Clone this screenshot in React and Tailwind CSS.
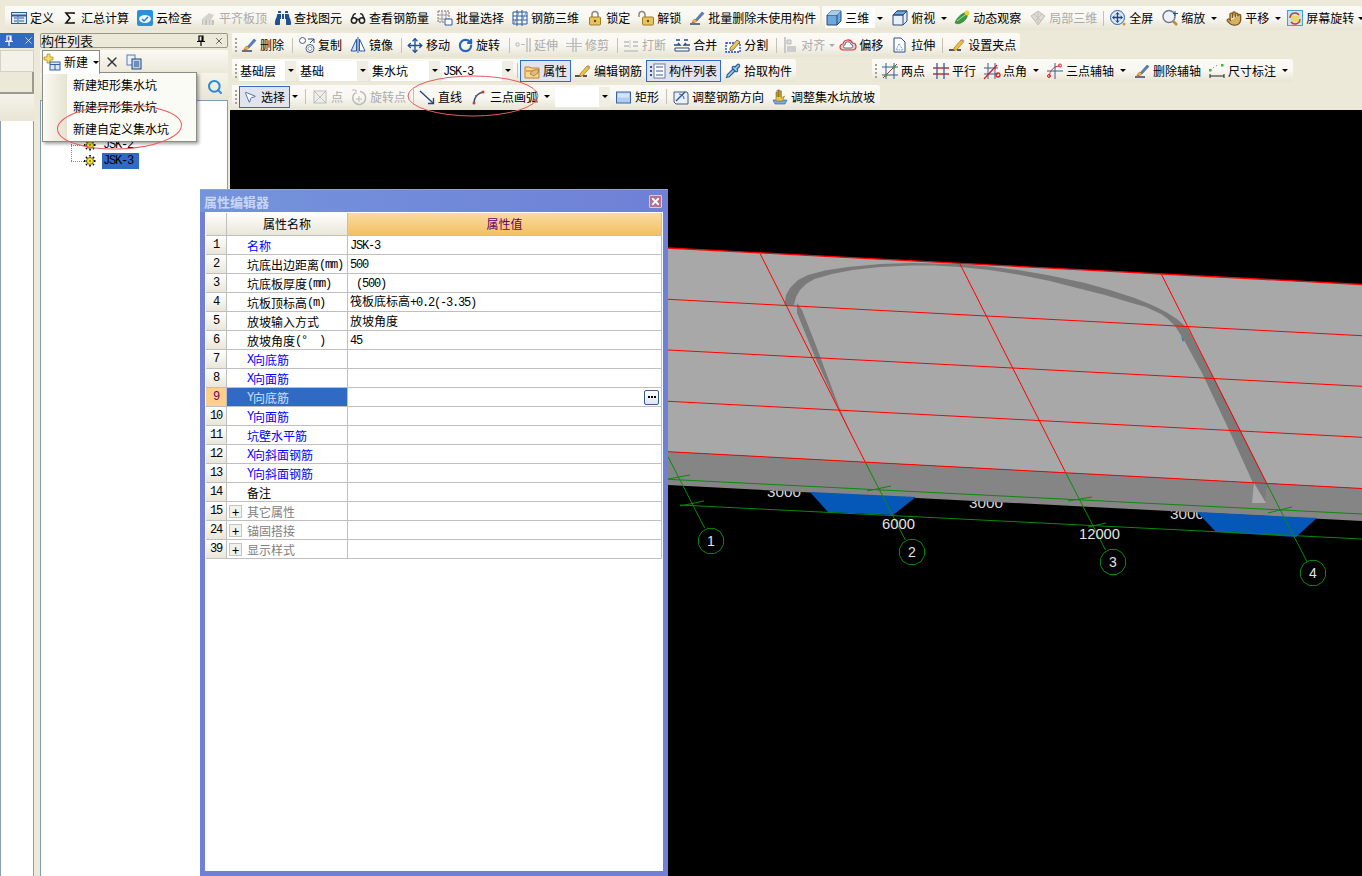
import { X, Move, RotateCw, Pipette, MousePointer2, Glasses, Hand, Search } from "lucide-react";
import { FaBinoculars } from "react-icons/fa";

const S = ({ children }) => (
  <svg viewBox="0 0 16 16" className="w-4 h-4 shrink-0 overflow-visible">
    {children}
  </svg>
);

const Brush = () => (
  <S>
    <path d="M1 14h10" stroke="#33486e" strokeWidth="1.5" />
    <path d="M6 10 13 2l2 1.5L8 11z" fill="#5b7fc4" stroke="#2b4a86" strokeWidth=".5" />
    <path d="M3 13c0-2 2-4 3-4l2 2c-1 1-3 2-5 2z" fill="#e8b050" stroke="#a06a20" strokeWidth=".5" />
    <circle cx="4" cy="13" r="1" fill="#d84a4a" />
  </S>
);
const Pencil = () => (
  <S>
    <path d="M0 13h6M8 13h4" stroke="#222" strokeWidth="1.5" />
    <path d="M5 11 12 3l2.5 2-7 8-3 .5z" fill="#f0c040" stroke="#8a6414" strokeWidth=".6" />
    <path d="m12 3 1-1 2.5 2-1 1z" fill="#d88080" />
  </S>
);
const PinMark = () => (
  <svg viewBox="0 0 10 11" className="w-[10px] h-[11px] shrink-0">
    <path d="M3 1h4v5H3zM1 6.500h8M5 7v4" fill="none" stroke="currentColor" strokeWidth="1.200" />
    <path d="M5.500 1.500h1.500v4.500H5.500z" fill="currentColor" />
  </svg>
);

const icons = {
  define: <S><rect x=".5" y="2.5" width="15" height="11" fill="#dfe9f6" stroke="#2d5c9e" /><path d="M.5 5.5h15" stroke="#2d5c9e" strokeWidth="2" /><path d="M3 8h3M3 11h3M8 8h5M8 11h5M7 6v7" stroke="#2d5c9e" /></S>,
  sigma: <S><path d="M12 4V3H4l4 5-4 5h8v-1" fill="none" stroke="#111" strokeWidth="1.6" /></S>,
  cloud: <S><rect x="0" y="0" width="16" height="16" rx="2" fill="#2b8fdc" /><ellipse cx="8" cy="9" rx="6" ry="4" fill="#eaf6ff" /><path d="m5 9 2 2 4-4" fill="none" stroke="#2b7cc4" strokeWidth="1.4" /></S>,
  flush: <S><path d="M1 10 9 3l5 2-3 5z" fill="#d4d4cc" /><rect x="2" y="10" width="12" height="5" fill="#c4c4bc" /><path d="M4 10v5M8 10v5M11 10v5" stroke="#eee" /></S>,
  binoculars: <span className="w-4 h-4 shrink-0 flex items-center justify-center text-[#1f4f94]"><FaBinoculars size={16} /></span>,
  glasses: <span className="w-4 h-4 shrink-0 flex items-center justify-center text-[#222]"><Glasses size={17} strokeWidth={2.2} /></span>,
  batch: <S><path d="M1 1h11v11H1z" fill="#f4f4f4" stroke="#777" strokeDasharray="2 1" /><path d="M1 5h11M1 9h11M5 1v11M9 1v11" stroke="#999" /><path d="M8 9h7v6H8z" fill="#fff" stroke="#2a5aa8" /></S>,
  rebar3d: <S><path d="M1 2h14v12H1z" fill="#fff" stroke="#24559c" /><path d="M1 6h14M1 10h14M5 0v16M10 0v16" stroke="#24559c" /><path d="m2 14 5-12M9 14l5-12" stroke="#6a8cc4" /></S>,
  lock: <S><path d="M5 7V4.500a3 3 0 0 1 6 0V7" fill="none" stroke="#8a8a80" strokeWidth="1.500" /><rect x="2.500" y="7" width="11" height="8" rx="1" fill="#e8c460" stroke="#a07c20" /><circle cx="8" cy="11" r="1.200" fill="#6a4a10" /></S>,
  unlock: <S><path d="M1 7V4.500a3 3 0 0 1 6 0V7" fill="none" stroke="#8a8a80" strokeWidth="1.500" /><rect x="4.500" y="7" width="11" height="8" rx="1" fill="#e8c460" stroke="#a07c20" /><circle cx="10" cy="11" r="1.200" fill="#6a4a10" /></S>,
  brush: <Brush />,
  cube: <S><path d="M1 5 5 1h10v10l-4 4H1z" fill="#6fa8dc" stroke="#24497c" /><path d="M1 5h10v10M11 5l4-4" fill="none" stroke="#24497c" /><path d="M1 5 5 1h10l-4 4z" fill="#a8cdea" /></S>,
  topview: <S><path d="M1 5 5 1h10v10l-4 4H1z" fill="#e8f0f8" stroke="#24497c" /><path d="M1 5 5 1h10l-4 4z" fill="#6fa8dc" stroke="#24497c" /><path d="M1 5h10v10M11 5l4-4" fill="none" stroke="#24497c" /></S>,
  orbit: <S><path d="M1 13C3 7 8 3 13 2c2 3-1 9-6 11-2 1-4 1-6 0z" fill="#3c9a3c" stroke="#1f5f1f" strokeWidth=".5" /><circle cx="13" cy="3" r="2.500" fill="#e8d040" /><path d="M3 11 11 5" stroke="#a8e0a8" /></S>,
  local3d: <S><path d="M1 6 8 1l7 5-7 9z" fill="#dcdcd4" stroke="#c0c0b8" /><path d="M4 4l7 7M8 1v14M12 4 5 11" stroke="#c4c4bc" /></S>,
  full: <S><circle cx="7.500" cy="7.500" r="7" fill="#dbe8f8" stroke="#2f5fa8" /><path d="M7.500 3v9M3 7.500h9" stroke="#1f3f88" strokeWidth="1.300" /><path d="m6 4.500 1.500-2 1.500 2M6 10.500l1.500 2 1.500-2M4.500 6l-2 1.500 2 1.500M10.500 6l2 1.500-2 1.500" fill="none" stroke="#1f3f88" /><circle cx="14" cy="14" r="1.500" fill="#d89020" /></S>,
  zoomIn: <S><circle cx="7" cy="6.500" r="6" fill="#eef2f8" stroke="#6a7a98" strokeWidth="1.500" /><path d="m11 11 4 4" stroke="#c08a30" strokeWidth="2.500" /><path d="M13 1v5M11 3.500h5" stroke="#24497c" /></S>,
  pan: <span className="w-4 h-4 shrink-0 flex items-center justify-center"><Hand size={17} fill="#d8b060" stroke="#7c5a20" /></span>,
  screenRot: <S><rect x=".5" y=".5" width="15" height="15" fill="#bfe8f4" stroke="#48a0c8" /><rect x="4" y="6" width="8" height="6" fill="#e8d870" /><path d="M3 8a5 5 0 0 1 9-3M13 9a5 5 0 0 1-9 3" fill="none" stroke="#e03030" strokeWidth="1.400" /></S>,
  copy: <S><circle cx="3.500" cy="3.500" r="3" fill="#fff" stroke="#4a5a7c" /><circle cx="11" cy="11.500" r="4" fill="#fff" stroke="#4a5a7c" /><circle cx="11" cy="11.500" r="2" fill="none" stroke="#8a9ab8" /><path d="M9 2h6v4M15 2l-4 4" fill="none" stroke="#24497c" /></S>,
  mirror: <S><path d="M6.500 2 1 14h5.500z" fill="#cfe0f4" stroke="#2a5aa8" /><path d="M9.500 2 15 14H9.500z" fill="#fff" stroke="#2a5aa8" /><path d="M8 0v16" stroke="#2a5aa8" /></S>,
  move: <span className="w-4 h-4 shrink-0 flex items-center justify-center text-[#1f4f94]"><Move size={17} strokeWidth={2} /></span>,
  rotate: <span className="w-4 h-4 shrink-0 flex items-center justify-center text-[#2a62c0]"><RotateCw size={15} strokeWidth={3.5} /></span>,
  extend: <S><path d="M1 6h3v3H1zM6 7.500h4" fill="none" stroke="#bbb" /><path d="M12 1v14M15 1v14" stroke="#bbb" strokeWidth="1.400" /></S>,
  trim: <S><path d="M0 6.500h16M0 9.500h16" stroke="#bbb" /><path d="M7 1v14M10 1v14" stroke="#bbb" strokeWidth="1.400" /></S>,
  breakIcon: <S><path d="M1 13h14v2H1z" fill="#ccc" /><path d="M1 5h5M10 5h5M1 9h5M10 9h5" stroke="#bbb" strokeWidth="1.400" /><path d="M7 3v8" stroke="#ccc" /></S>,
  merge: <S><path d="M0 8h6l-2-2M16 8h-6l2-2" fill="none" stroke="#24497c" strokeWidth="1.300" /><path d="M1 11h14v3H1z" fill="#fff" stroke="#24497c" /><path d="M2 3h4M10 3h4" stroke="#24497c" strokeWidth="1.300" /></S>,
  split: <S><path d="M1 6h14v9H1z" fill="#fff" stroke="#1a40c8" strokeDasharray="2 1" strokeWidth="1.300" /><path d="m5 11 7-8 3 2-7 8-3 .5z" fill="#f0c850" stroke="#444" strokeWidth=".7" /></S>,
  align: <S><path d="M3 0v16" stroke="#bbb" strokeWidth="1.500" /><path d="M5 9h9v6H5z" fill="#ccc" /><path d="M5 3h4v4H5z" fill="#ddd" stroke="#bbb" /></S>,
  offset: <S><path d="M3 13a3 3 0 0 1 0-6 5 5 0 0 1 9.500-1 3.500 3.500 0 0 1 0 7z" fill="#f4c8c0" stroke="#c84040" strokeWidth="1.200" /><path d="M5 11a1.500 1.500 0 0 1 0-3 3 3 0 0 1 6-.5 1.700 1.700 0 0 1 0 3.500z" fill="#fff" stroke="#5070b0" /></S>,
  stretch: <S><path d="M2 1h7l4 4v10H2z" fill="#fff" stroke="#2a4a88" /><path d="M7 7 4 13h7z" fill="none" stroke="#2a78c8" strokeDasharray="1 1" /></S>,
  grip: <Pencil />,
  attr: <S><path d="M1 4h5l1 1h8v10H1z" fill="#f8d890" stroke="#c88028" /><path d="M2 8h13" stroke="#e8a040" strokeWidth="2" /><path d="M6 11c2-4 5-5 9-4l-1 3-4 3z" fill="#e0b880" stroke="#806030" strokeWidth=".6" /></S>,
  editBar: <Pencil />,
  list: <S><rect x="4" y="1" width="11" height="14" fill="#fff" stroke="#6c7a94" /><path d="M6 4h7M6 8h7M6 12h7" stroke="#2a5a9c" /><path d="M0 3h2v2H0zM0 7h2v2H0zM0 11h2v2H0z" fill="#2a5a9c" /></S>,
  pick: <span className="w-4 h-4 shrink-0 flex items-center justify-center text-[#24609c]"><Pipette size={16} fill="#a8c8e8" strokeWidth={1.8} /></span>,
  twoPt: <S><path d="M4 0v16M12 0v16M0 4h16M0 12h16" stroke="#3a5a94" /><path d="m1 15 14-14" stroke="#b03030" /><circle cx="4" cy="12" r="1.500" fill="#3aa03a" /><circle cx="12" cy="4" r="1.500" fill="#3aa03a" /></S>,
  parallel: <S><path d="M0 5h16M0 11h16" stroke="#c83030" strokeWidth="1.300" /><path d="M4 0v16M11 0v16" stroke="#3a5a9c" strokeWidth="1.300" /></S>,
  ptAngle: <S><path d="M4 0v16M11 0v16M0 5h14M0 11h14" stroke="#3a5a94" /><path d="m0 16 13-14" stroke="#d02020" strokeWidth="1.200" /><circle cx="14" cy="12" r="2" fill="none" stroke="#e02020" strokeWidth="1.300" /></S>,
  threeAxis: <S><path d="M2 14C3 7 7 3 13 3" fill="none" stroke="#d03030" /><path d="M8 0v16M0 8h16" stroke="#3a5a94" /><circle cx="2" cy="13" r="1.500" fill="none" stroke="#e02020" /><circle cx="13" cy="2.500" r="1.500" fill="none" stroke="#e02020" /></S>,
  dim: <S><rect x="0" y="6" width="2.500" height="2.500" fill="#38b838" /><rect x="12" y="1" width="2.500" height="2.500" fill="#38b838" /><path d="M1 11v4M15 11v4M1 13h14" stroke="#222" /><path d="M4 5l1-1M7 3l2-1" stroke="#777" strokeDasharray="1 1" /></S>,
  cursor: <span className="w-4 h-4 shrink-0 flex items-center justify-center text-[#3a5a9c]"><MousePointer2 size={14} strokeWidth={1.4} fill="#fff" /></span>,
  pointBox: <S><rect x="2" y="2" width="12" height="12" fill="#f0f0ea" stroke="#bbb" /><path d="m2 2 12 12M14 2 2 14" stroke="#bbb" /></S>,
  rotPoint: <S><path d="M4 4a6.500 6.500 0 1 0 5-1.500" fill="none" stroke="#bbb" strokeWidth="1.600" /><path d="M1 1h4v4" fill="none" stroke="#bbb" /><path d="M8 7v6M5 10h6" stroke="#bbb" /></S>,
  line: <S><path d="m1 2 13 12" stroke="#1f3f88" strokeWidth="1.300" /><path d="M14.500 9v5.500H9" fill="none" stroke="#1f3f88" strokeWidth="1.300" /></S>,
  arc: <S><path d="M3 14c0-6 4-10 9-11" fill="none" stroke="#2a4a88" strokeWidth="1.500" /><circle cx="3" cy="14" r="1.500" fill="#d04030" /><circle cx="5" cy="7" r="1" fill="#d04030" /><circle cx="12" cy="3" r="1.500" fill="#d04030" /></S>,
  rect: <S><rect x=".5" y="3" width="14" height="11" fill="#b0ccf4" stroke="#3a62a8" /><rect x="2" y="4.500" width="11" height="4" fill="#d4e4fa" /></S>,
  adjustDir: <S><path d="M1 3h13l1 2v10H3L1 13z" fill="#e8f0f8" stroke="#4a5a78" /><path d="M3 12 12 3" stroke="#2a5aa8" strokeWidth="1.500" /><path d="M6 5a5 5 0 0 1 5 5" fill="none" stroke="#2a5aa8" /></S>,
  adjustSlope: <S><path d="M1 11h14l-2 4H3z" fill="#78a8e0" stroke="#2a5aa8" strokeWidth=".6" /><path d="M4 11V3l1 0v5V1h1.500v7V1H8v7V2h1.500v7l3-2-2 5H4z" fill="#e8c848" stroke="#7a5a10" strokeWidth=".5" /></S>,
};

const Mono = ({ children }) => (
  <span className="font-['Liberation_Mono',monospace] text-[12px] tracking-[-1.2px] whitespace-pre">
    {children}
  </span>
);

const Caret = ({ className = "ml-[6px]", dim }) => (
  <span
    className={`w-0 h-0 shrink-0 border-x-[3px] border-t-[3px] border-x-transparent ${dim ? "border-t-[#aaa]" : "border-t-black"} ${className}`}
  />
);

const Sep = ({ className = "" }) => <span className={`w-px h-[15px] shrink-0 bg-[#c5c2b0] ${className}`} />;
const Grip = () => <span className="w-[2px] h-[14px] shrink-0 ml-[3px] border-l-2 border-dotted border-[#a3a194]" />;

const Tool = ({ i, t, dim, className = "ml-2" }) => (
  <div className={`flex items-center gap-[3px] shrink-0 ${dim ? "text-[#aaa]" : "text-black"} ${className}`}>
    {icons[i]}
    <span className="whitespace-nowrap">{t}</span>
  </div>
);

const Bar = ({ className = "", children }) => (
  <div
    className={`flex items-center rounded-r-[3px] bg-gradient-to-b from-[#fbfaf6] via-[#f8f7f1] to-[#e7e4d3] ${className}`}
  >
    {children}
  </div>
);

const Combo = ({ w, t, className }) => (
  <div className={`flex items-center h-[20px] bg-white shrink-0 ${w} ${className}`}>
    <span className="flex-1 pl-px whitespace-nowrap">{t}</span>
    <span className="w-[11px] h-full flex items-center justify-center bg-[#f0eee3]">
      <Caret className="" />
    </span>
  </div>
);

const Toggle = ({ i, t, w, className }) => (
  <div
    className={`flex items-center h-[22px] pl-[3px] gap-[3px] shrink-0 border border-[#316ac5] bg-[#e1e4ee] ${w} ${className}`}
  >
    {icons[i]}
    <span className="whitespace-nowrap">{t}</span>
  </div>
);

const Gear = () => (
  <svg viewBox="0 0 12 12" className="w-3 h-3 shrink-0">
    <path d="M6 0v12M0 6h12M2 2l8 8M10 2l-8 8" stroke="#111" strokeWidth="1.800" strokeDasharray="1.500 1" />
    <circle cx="6" cy="6" r="3.500" fill="#f4e818" stroke="#333" strokeWidth=".7" />
    <circle cx="6" cy="6" r="1" fill="#7a7a10" />
  </svg>
);

const LeftTabs = () => (
  <div className="w-[34px] shrink-0 flex flex-col">
    <div className="h-[15px] bg-[#316ac5] flex items-center gap-[9px] pl-[4px] text-white">
      <PinMark />
      <X size={11} strokeWidth={1.5} />
    </div>
    <div className="h-[22px] mt-[2px] bg-[#f4f2e8] border border-[#d4d2c4]" />
    <div className="h-[22px] bg-[#ece9d8] border-r-2 border-b-2 border-[#9c9a8c]" />
    <div className="h-[27px] bg-gradient-to-b from-[#f6f4ea] to-[#e8e5d5]" />
    <div className="flex-1 bg-white border-x border-[#8a9cb8]" />
  </div>
);

const ComponentList = () => (
  <div className="w-[188px] ml-[6px] shrink-0 flex flex-col">
    <div className="h-[15px] flex items-center justify-between pr-[3px] rounded-[2px] border border-[#9a988a] bg-[#ece9d8]">
      <span className="text-[#111] text-[13px]">构件列表</span>
      <div className="flex items-center gap-2 text-black">
        <PinMark />
        <X size={10} strokeWidth={1.4} />
      </div>
    </div>
    <div className="h-[23px] mt-[2px] flex items-center bg-gradient-to-b from-[#faf9f4] to-[#ece9d8]">
      <div className="relative z-20 ml-[2px] w-[58px] h-[24px] flex items-center bg-white border border-b-0 border-[#8c8c84] pl-[1px] gap-1">
        <S>
          <path d="M3 0h3v3h3v3H6v3H3V6H0V3h3z" fill="#f4e060" stroke="#a08820" strokeWidth=".7" />
          <rect x="6" y="8" width="10" height="8" fill="#dbe6f5" stroke="#34619c" />
          <path d="M6 10.500h10M11 10.500V16" stroke="#34619c" />
        </S>
        <span>新建</span>
        <Caret className="ml-[1px]" />
      </div>
      <span className="ml-[4px] text-[#333]"><X size={16} strokeWidth={2} /></span>
      <span className="ml-[6px]">
        <S>
          <rect x="1" y="1" width="8" height="10" fill="#e8f0f8" stroke="#5a7cb0" />
          <rect x="6" y="5" width="9" height="10" fill="#b8d0ec" stroke="#24497c" />
          <path d="M8 8h5M8 10h5M8 12h5" stroke="#24497c" />
        </S>
      </span>
    </div>
    <div className="h-[27px] flex items-center justify-end pr-[5px] bg-gradient-to-b from-[#f6f4ea] to-[#e8e5d5]">
      <span className="text-[#2a8ad8]"><Search size={16} strokeWidth={3} /></span>
    </div>
    <div className="flex-1 bg-white border-x border-t border-[#7f9db9] pt-[36px] pl-[30px]">
      <div className="relative">
        {/* tree connector */}
        <span className="absolute left-0 -top-[4px] h-[28px] w-px border-l border-dotted border-[#888]" />
        {[["JSK-2", false], ["JSK-3", true]].map(([name, on]) => (
          <div key={name} className="h-[16px] flex items-center">
            <span className="w-[13px] h-px border-t border-dotted border-[#888]" />
            <span className="w-[12px] flex justify-center"><Gear /></span>
            <span className={`ml-[6px] w-[37px] h-[16px] flex items-center pl-[1px] ${on ? "bg-[#316ac5]" : ""}`}>
              <Mono>{name}</Mono>
            </span>
          </div>
        ))}
      </div>
    </div>
  </div>
);

const rows = [
  ["1", <>名称</>, <Mono>JSK-3</Mono>, "blue"],
  ["2", <>坑底出边距离<Mono>(mm)</Mono></>, <Mono>500</Mono>],
  ["3", <>坑底板厚度<Mono>(mm)</Mono></>, <Mono> (500)</Mono>],
  ["4", <>坑板顶标高<Mono>(m)</Mono></>, <>筏板底标高<Mono>+0.2(-3.35)</Mono></>],
  ["5", <>放坡输入方式</>, <>放坡角度</>],
  ["6", <>放坡角度<Mono>(°  )</Mono></>, <Mono>45</Mono>],
  ["7", <><Mono>X</Mono>向底筋</>, null, "blue"],
  ["8", <><Mono>X</Mono>向面筋</>, null, "blue"],
  ["9", <><Mono>Y</Mono>向底筋</>, null, "selected"],
  ["10", <><Mono>Y</Mono>向面筋</>, null, "blue"],
  ["11", <>坑壁水平筋</>, null, "blue"],
  ["12", <><Mono>X</Mono>向斜面钢筋</>, null, "blue"],
  ["13", <><Mono>Y</Mono>向斜面钢筋</>, null, "blue"],
  ["14", <>备注</>, null],
  ["15", <>其它属性</>, null, "group"],
  ["24", <>锚固搭接</>, null, "group"],
  ["39", <>显示样式</>, null, "group"],
];

const PropertyEditor = () => (
  <div className="absolute left-[200px] top-[189px] w-[468px] h-[687px] z-10 flex flex-col border-x-[5px] border-b-[5px] border-[#6f80d6] bg-white">
    <div className="-mx-[5px] h-[23px] shrink-0 flex items-center justify-between pl-[4px] pr-[6px] bg-gradient-to-r from-[#7494dc] to-[#6f80d6] border-t border-[#8ea2e6]">
      <span className="text-[13px] font-bold text-[#c8d6f2]">属性编辑器</span>
      <span className="w-[13px] h-[13px] flex items-center justify-center rounded-[1px] border border-[#d8c8e0] bg-[#b4708c] text-white">
        <X size={11} strokeWidth={4} />
      </span>
    </div>
    <div className="mt-[1px] ml-[1px] w-[456px] border-r border-[#bfbfbf] text-[12px]">
      <div className="flex h-[23px] border-b border-[#bfbfbf]">
        <div className="w-[21px] border-r border-[#bfbfbf] bg-gradient-to-b from-white to-[#e9e6d8]" />
        <div className="w-[121px] border-r border-[#bfbfbf] flex items-center justify-center bg-gradient-to-b from-white to-[#e9e6d8]">属性名称</div>
        <div className="flex-1 flex items-center justify-center text-[#660066] bg-gradient-to-b from-[#fadb9f] to-[#f2c064]">属性值</div>
      </div>
      {rows.map(([n, name, val, kind]) => (
        <div key={n} className="flex h-[19px] border-b border-[#bfbfbf]">
          <div className={`w-[21px] shrink-0 border-r border-[#bfbfbf] flex items-center justify-center ${kind === "selected" ? "bg-[#fdd08a] text-[#660066]" : "bg-gradient-to-b from-white to-[#e9e6d8]"}`}>
            <Mono>{n}</Mono>
          </div>
          <div
            className={`w-[121px] shrink-0 border-r border-[#bfbfbf] flex items-center pt-px whitespace-nowrap ${
              kind === "selected"
                ? "bg-[#316ac5] text-[#cfe0ff] pl-[20px]"
                : kind === "blue"
                  ? "text-[#0000ff] pl-[20px]"
                  : kind === "group"
                    ? "text-[#808080] pl-[2px]"
                    : "pl-[20px]"
            }`}
          >
            {kind === "group" && (
              <span className="w-[13px] h-[13px] mr-[5px] flex items-center justify-center border border-[#c4c4c0] bg-[#f2f2ec] text-black text-[13px] leading-none">+</span>
            )}
            {name}
          </div>
          <div className="flex-1 flex items-center justify-between pl-[2px] pr-[2px] whitespace-pre">
            <span>{val}</span>
            {kind === "selected" && (
              <span className="w-[15px] h-[15px] flex items-center justify-center gap-px rounded-[2px] border border-[#3a5a8a] bg-gradient-to-b from-white to-[#dfe6f0]">
                <i className="w-[2px] h-[2px] bg-black" />
                <i className="w-[2px] h-[2px] bg-black" />
                <i className="w-[2px] h-[2px] bg-black" />
              </span>
            )}
          </div>
        </div>
      ))}
    </div>
  </div>
);

const axes = [
  [711, 541, "1"],
  [912, 552, "2"],
  [1113, 562, "3"],
  [1313, 573, "4"],
];

// 12-sided outline, the CAD view draws its circles this coarse
const gon = (cx, cy, r) =>
  Array.from({ length: 12 }, (_, k) => {
    const a = (k * Math.PI) / 6 + Math.PI / 12;
    return `${cx + r * Math.cos(a)},${cy + r * Math.sin(a)}`;
  }).join(" ");

const labelClass = "font-['Liberation_Sans',sans-serif]";

const Canvas = () => (
  <div className="flex-1 min-h-0 bg-black">
    <svg viewBox="230 110 1132 766" className="w-full h-full block">
      <g fill="#d8d8d8" fontSize="14" className={labelClass}>
        <text x="767" y="497" textLength="34" lengthAdjust="spacingAndGlyphs">3000</text>
        <text x="969" y="508" textLength="34" lengthAdjust="spacingAndGlyphs">3000</text>
        <text x="1170" y="519" textLength="34" lengthAdjust="spacingAndGlyphs">3000</text>
      </g>
      <polygon points="668,248 1362,284.500 1362,488.500 668,451.700" fill="#a8a8a8" />
      <polygon points="668,451.700 1362,488.500 1362,521 668,485" fill="#858585" />
      {/* sump outline, arc then the two legs */}
      <polygon
        points="784.500,305 786,295 790,288 798,280 808,275 825,270.500 848,267 880,264 911,263 960,264 990,266.500 1018,270 1050,275.500 1085,283 1110,290 1134.600,298 1152,305 1166,312 1177,319 1186,327 1175,326 1168,319 1161,314 1146,307 1130,302.500 1105,295 1081,289 1050,281 1018,274.500 990,270 960,267 935,265.500 911,265.500 880,267 852.500,270 832,274 814.500,279 806,284 800,290 796,297 794,305"
        fill="#7a7a7a"
      />
      <polygon points="797,303 802,310 815,343 839,407 857,447 839,410 815,357 797,313" fill="#7b7b7b" />
      <polygon points="1175,326 1187,327 1215,380 1242,433 1267,483 1265,503 1253,483 1229,430 1202,373 1184,340" fill="#7b7b7b" />
      <polygon points="1254,483 1266,503 1252,503" fill="#aaaaaa" />
      <polygon points="1181,336 1184,340 1183,342" fill="#1f6fd0" />
      <polygon points="810,492 916,497 893,515 828,512" fill="#0558b8" />
      <polygon points="1197,512 1317,518 1296,537 1216,532" fill="#0558b8" />
      <g stroke="#ff0000" strokeWidth="1" fill="none">
        <path d="M668 248 1362 284.500" strokeWidth="1.300" />
        <path d="M668 299.300 1362 335.700" />
        <path d="M668 350 1362 386.300" />
        <path d="M668 401.300 1362 437.300" />
        <path d="M668 451.700 1362 488.500" />
        <path d="M760.300 254 865 461.700" />
        <path d="M960 264 1065.200 471.700" />
        <path d="M1161.400 274.300 1266.600 483.300" />
      </g>
      <g stroke="#0a8a0a" strokeWidth="1" fill="none">
        <path d="M668 479.300 1362 514" />
        <path d="M680 505 1362 539" />
        <path d="M668 456.700 704.800 528.300" />
        <path d="M865 461.700 905.300 540" />
        <path d="M1065.200 471.700 1105.500 550" />
        <path d="M1266.600 483.300 1307 561.700" />
        <path d="M668 479 690 475M867 491 891 486M1068 501 1092 497M1268 513 1292 507M680 506 704 501M1088 527 1106 523" />
        {axes.map(([x, y, n]) => (
          <polygon key={n} points={gon(x, y, 13)} />
        ))}
      </g>
      <g fill="#e4e4e4" fontSize="15" className={labelClass}>
        <text x="882" y="529" textLength="33" lengthAdjust="spacingAndGlyphs">6000</text>
        <text x="1079" y="539" textLength="41" lengthAdjust="spacingAndGlyphs">12000</text>
      </g>
      <g fill="#e4e4e4" fontSize="14" textAnchor="middle" className={labelClass}>
        {axes.map(([x, y, n]) => (
          <text key={n} x={x} y={y + 5}>
            {n}
          </text>
        ))}
      </g>
    </svg>
  </div>
);

export default function App() {
  return (
    <div className="relative w-[1362px] h-[876px] overflow-hidden flex flex-col bg-[#ece9d8] text-[12px] leading-none text-black font-['Noto_Sans_CJK_SC',sans-serif]">
      <div className="h-[33px] shrink-0 pt-[6px] flex items-start">
        <Bar className="ml-[5px] h-[24px] pr-1">
          <Tool i="define" t="定义" className="ml-[6px]" />
          <Tool i="sigma" t="汇总计算" />
          <Tool i="cloud" t="云检查" />
          <Tool i="flush" t="平齐板顶" dim />
          <Tool i="binoculars" t="查找图元" />
          <Tool i="glasses" t="查看钢筋量" />
          <Tool i="batch" t="批量选择" />
          <Tool i="rebar3d" t="钢筋三维" />
          <Tool i="lock" t="锁定" />
          <Tool i="unlock" t="解锁" />
          <Tool i="brush" t="批量删除未使用构件" />
        </Bar>
        <Bar className="ml-[2px] h-[24px] flex-1 min-w-0 overflow-hidden">
          <div className="ml-[3px] w-[50px] h-[20px] bg-white flex items-center gap-[3px] pl-px shrink-0">
            {icons.cube}
            <span>三维</span>
          </div>
          <Caret className="ml-[2px]" />
          <Tool i="topview" t="俯视" className="ml-[9px]" />
          <Caret />
          <Tool i="orbit" t="动态观察" className="ml-[7px]" />
          <Tool i="local3d" t="局部三维" dim className="ml-[9px]" />
          <Sep className="ml-[6px]" />
          <Tool i="full" t="全屏" className="ml-[6px]" />
          <Tool i="zoomIn" t="缩放" className="ml-[9px]" />
          <Caret />
          <div className="ml-[9px] flex items-center gap-[3px] shrink-0">
            {icons.pan}
            <span>平移</span>
          </div>
          <Caret />
          <Tool i="screenRot" t="屏幕旋转" className="ml-[6px]" />
          <Caret className="ml-1" />
        </Bar>
      </div>

      <div className="flex-1 min-h-0 flex">
        <LeftTabs />
        <ComponentList />
        <div className="flex-1 min-w-0 ml-[2px] flex flex-col">
          <div className="flex pl-[2px] h-[26px] shrink-0">
            <Bar className="h-[24px] pr-1">
              <Grip />
              <Tool i="brush" t="删除" className="ml-1" />
              <Sep className="ml-2" />
              <Tool i="copy" t="复制" className="ml-[6px]" />
              <Tool i="mirror" t="镜像" />
              <Sep className="ml-2" />
              <Tool i="move" t="移动" className="ml-[5px]" />
              <Tool i="rotate" t="旋转" className="ml-[7px]" />
              <Sep className="ml-[9px]" />
              <Tool i="extend" t="延伸" dim className="ml-[5px]" />
              <Tool i="trim" t="修剪" dim />
              <Sep className="ml-2" />
              <Tool i="breakIcon" t="打断" dim className="ml-[5px]" />
              <Tool i="merge" t="合并" />
              <Tool i="split" t="分割" />
              <Sep className="ml-2" />
              <Tool i="align" t="对齐" dim className="ml-[5px]" />
              <Caret className="ml-1" dim />
              <Tool i="offset" t="偏移" className="ml-[5px]" />
              <Tool i="stretch" t="拉伸" className="ml-[9px]" />
              <Sep className="ml-[7px]" />
              <Tool i="grip" t="设置夹点" className="ml-[6px]" />
            </Bar>
          </div>
          <div className="flex pl-[2px] h-[26px] shrink-0">
            <Bar className="h-[23px] pr-1">
              <Grip />
              <Combo w="w-[57px]" t="基础层" className="ml-[2px]" />
              <Combo w="w-[69px]" t="基础" className="ml-[3px]" />
              <Combo w="w-[69px]" t="集水坑" className="ml-[3px]" />
              <Combo w="w-[71px]" t={<Mono>JSK-3</Mono>} className="ml-[2px]" />
              <Sep className="ml-1" />
              <Toggle i="attr" t="属性" w="w-[51px]" className="ml-[2px]" />
              <Tool i="editBar" t="编辑钢筋" className="ml-1" />
              <Toggle i="list" t="构件列表" w="w-[75px]" className="ml-1" />
              <Tool i="pick" t="拾取构件" className="ml-1" />
            </Bar>
            <Bar className="h-[23px] ml-[76px] pr-[5px]">
              <Grip />
              <Tool i="twoPt" t="两点" className="ml-[5px]" />
              <Tool i="parallel" t="平行" />
              <Tool i="ptAngle" t="点角" />
              <Caret />
              <Tool i="threeAxis" t="三点辅轴" />
              <Caret />
              <Tool i="brush" t="删除辅轴" />
              <Tool i="dim" t="尺寸标注" />
              <Caret />
            </Bar>
          </div>
          <div className="flex pl-[2px] h-[25px] shrink-0">
            <Bar className="h-[25px] pb-[2px] pr-[5px]">
              <Grip />
              <div className="ml-[2px] w-[51px] h-[22px] flex items-center gap-[3px] pl-[2px] shrink-0 border border-[#316ac5] bg-[#e1e4ee]">
                {icons.cursor}
                <span>选择</span>
              </div>
              <Caret className="ml-[2px]" />
              <Sep className="ml-[7px]" />
              <Tool i="pointBox" t="点" dim className="ml-[6px]" />
              <Tool i="rotPoint" t="旋转点" dim />
              <Sep className="ml-[7px]" />
              <Tool i="line" t="直线" className="ml-[5px]" />
              <Tool i="arc" t="三点画弧" className="ml-[9px]" />
              <Caret />
              <Combo w="w-[55px]" t="" className="ml-[5px]" />
              <Tool i="rect" t="矩形" className="ml-[6px]" />
              <Sep className="ml-[7px]" />
              <Tool i="adjustDir" t="调整钢筋方向" className="ml-[6px]" />
              <Tool i="adjustSlope" t="调整集水坑放坡" />
            </Bar>
          </div>
          <Canvas />
        </div>
      </div>

      <PropertyEditor />

      <div className="absolute left-[42px] top-[72px] w-[155px] h-[70px] z-10 flex flex-col border border-[#8c8c84] bg-[#fbfbf5] shadow-[2px_2px_3px_rgba(0,0,0,0.35)]">
        <div className="absolute left-0 top-0 bottom-0 w-[24px] bg-gradient-to-r from-[#fbfaf3] to-[#e6e3d2]" />
        {["新建矩形集水坑", "新建异形集水坑", "新建自定义集水坑"].map((label) => (
          <div key={label} className="relative h-[22px] shrink-0 flex items-center pl-[30px] first:mt-[2px] pt-[2px]">
            {label}
          </div>
        ))}
      </div>

      <svg className="absolute left-0 top-0 w-[1362px] h-[876px] z-30 pointer-events-none" viewBox="0 0 1362 876">
        <ellipse cx="119.500" cy="127" rx="62" ry="22" fill="none" stroke="#e85a5a" transform="rotate(-2 119.500 127)" />
        <ellipse cx="473" cy="96" rx="65" ry="20" fill="none" stroke="#e85a5a" />
      </svg>
    </div>
  );
}
